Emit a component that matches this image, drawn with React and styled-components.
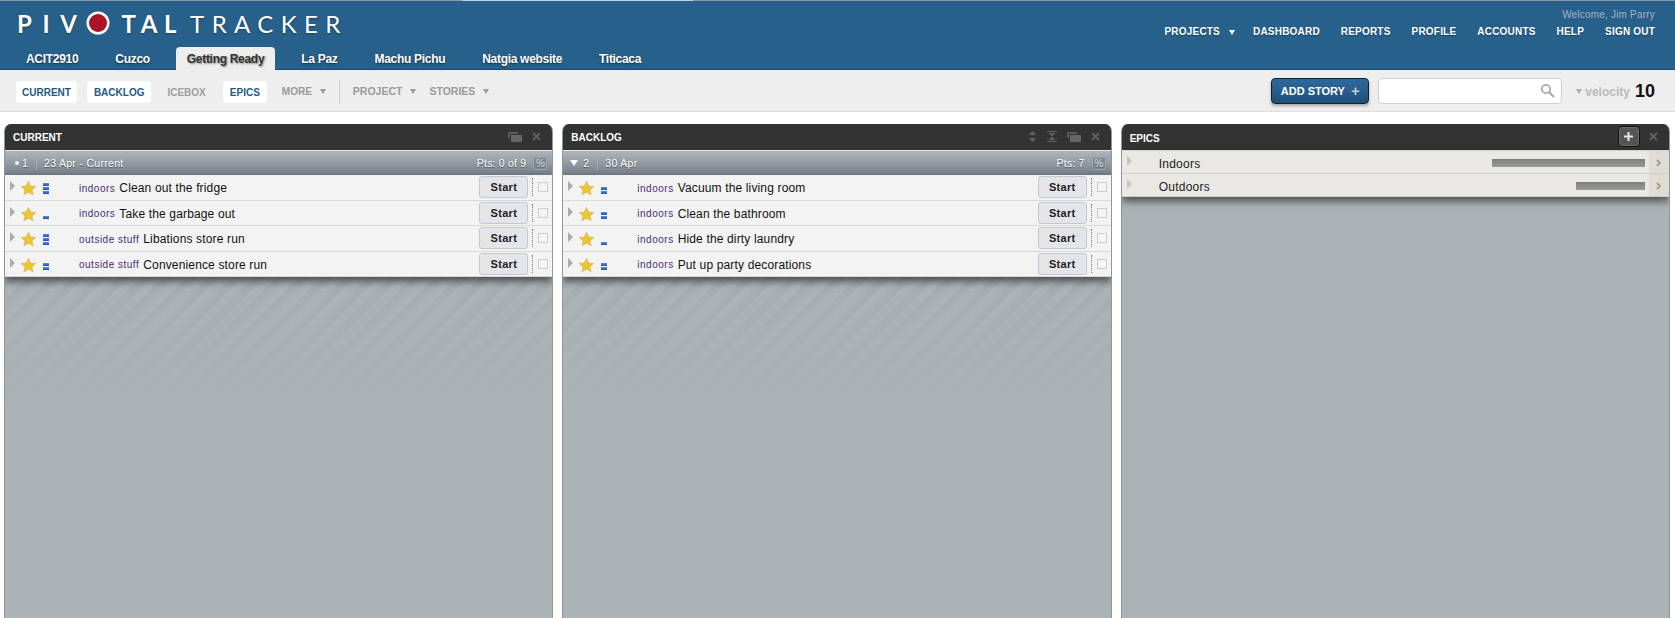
import React from 'react';
import styled, { createGlobalStyle } from 'styled-components';

const GlobalStyle = createGlobalStyle`
  html, body { margin: 0; padding: 0; height: 100%; overflow: hidden; background: #fff; }
  body { font-family: "Liberation Sans", Arial, sans-serif; }
  #root { height: 100%; }
  * { box-sizing: border-box; }
`;

const Page = styled.div`
  display: flex;
  flex-direction: column;
  height: 618px;
`;

//#region header
const TopBar = styled.header`
  position: relative;
  height: 70px;
  flex: none;
  background: #27618b;
  border-top: 1px solid #8d9aa5;
  box-shadow: inset 0 -1px 0 #1d4a6c;
  display: flex;
  flex-direction: column;
  justify-content: space-between;
`;
const ActiveStrip = styled.span`
  position: absolute;
  top: -1px;
  left: 462px;
  width: 231px;
  height: 1px;
  background: #b9d3e6;
`;
const TopRow = styled.div`
  display: flex;
  justify-content: space-between;
  padding: 0 20px 0 17px;
`;
const Logo = styled.div`
  display: flex;
  align-items: center;
  height: 46px;
  color: #fff;
  font-family: Lato, "Liberation Sans", sans-serif;
  font-size: 24px;
  text-shadow: 0 1px 2px rgba(0, 0, 0, 0.35);
  padding-bottom: 2px;
`;
const LogoBold = styled.span`
  font-weight: 700;
  letter-spacing: ${({ $tight }) => ($tight ? 6.6 : 10.6)}px;
`;
const LogoLight = styled.span`
  font-weight: 400;
  letter-spacing: 7.4px;
  margin-left: 7px;
`;
const LogoDot = styled.svg`
  width: 24px;
  height: 24px;
  margin: 0 11px 0 -1px;
`;
const UserArea = styled.div`
  display: flex;
  flex-direction: column;
  align-items: flex-end;
`;
const Welcome = styled.div`
  color: #a3b4c1;
  font-size: 10px;
  line-height: 12px;
  margin-top: 8px;
  letter-spacing: 0.2px;
`;
const NavList = styled.nav`
  display: flex;
  align-items: center;
  gap: 21px;
  margin-top: 4px;
`;
const NavLink = styled.span`
  color: #fff;
  font-size: 10px;
  font-weight: 700;
  line-height: 14px;
  letter-spacing: 0.2px;
  text-shadow: 0 1px 1px rgba(0, 0, 0, 0.4);
  display: flex;
  align-items: center;
  gap: 9px;
  margin-right: ${({ $pull = 0 }) => -$pull}px;
`;
const DownArrow = styled.i`
  width: 0;
  height: 0;
  flex: none;
  border-left: ${({ $size = 3 }) => $size}px solid transparent;
  border-right: ${({ $size = 3 }) => $size}px solid transparent;
  border-top: ${({ $size = 3 }) => $size + 2}px solid ${({ $color = '#fff' }) => $color};
`;
const TabRow = styled.div`
  display: flex;
  gap: 15px;
  padding-left: 15px;
`;
const Tab = styled.div`
  height: 24px;
  padding: 0 11px;
  border-radius: 4px 4px 0 0;
  font-size: 12px;
  font-weight: 700;
  line-height: 25px;
  letter-spacing: -0.3px;
  white-space: nowrap;
  color: ${({ $active }) => ($active ? '#333' : '#fff')};
  background: ${({ $active }) => ($active ? '#eeeeee' : 'transparent')};
  text-shadow: ${({ $active }) => ($active ? '1px 1px 2px rgba(0,0,0,.45)' : '0 1px 2px rgba(0,0,0,.6)')};
`;
//#endregion

//#region toolbar
const Toolbar = styled.div`
  height: 42px;
  flex: none;
  background: #eeeeee;
  border-bottom: 1px solid #dcdcdc;
  display: flex;
  align-items: center;
  padding: 0 20px 0 16px;
`;
const ToolLeft = styled.div`
  display: flex;
  align-items: center;
  flex: 1;
  padding-top: 2px;
`;
const ToolButton = styled.span`
  display: block;
  height: 22px;
  line-height: 23px;
  padding: 0 ${({ $pad = 6 }) => $pad}px;
  margin-right: ${({ $gap = 10 }) => $gap}px;
  border-radius: 4px;
  font-size: 10px;
  font-weight: 700;
  color: ${({ $on }) => ($on ? '#1f5a86' : '#9e9e9e')};
  background: ${({ $on }) => ($on ? '#fff' : 'transparent')};
`;
const ToolMenu = styled.span`
  display: flex;
  align-items: center;
  gap: 8px;
  font-size: ${({ $raised }) => ($raised ? 10.5 : 10)}px;
  font-weight: 700;
  color: #9a9a9a;
  margin-top: ${({ $raised }) => ($raised ? -1 : 0)}px;
  margin-right: ${({ $gap = 13 }) => $gap}px;
`;
const ToolDivider = styled.span`
  width: 1px;
  height: 24px;
  background: #cfcfcf;
  margin: 0 13px;
`;
const AddStory = styled.button`
  width: 98px;
  height: 26px;
  border: 1px solid #14202c;
  border-radius: 4px;
  background: linear-gradient(#2f6a9c, #1f4f7c);
  color: #fff;
  font: 700 11px "Liberation Sans", sans-serif;
  box-shadow: 0 2px 3px rgba(0, 0, 0, 0.3);
  display: flex;
  align-items: center;
  justify-content: center;
  gap: 6px;
  padding: 0;
`;
const PlusMark = styled.span`
  font-size: 15px;
  font-weight: 700;
  line-height: 12px;
  color: #b9cddd;
`;
const SearchBox = styled.div`
  width: 184px;
  height: 26px;
  margin: 0 14px 0 9px;
  background: #fff;
  border: 1px solid #cfcfcf;
  border-radius: 4px;
  display: flex;
  align-items: center;
  justify-content: flex-end;
  padding-right: 6px;
`;
const Velocity = styled.div`
  display: flex;
  align-items: center;
  gap: 3px;
  margin-top: 2px;
  font-size: 12px;
  font-weight: 700;
  color: #b9b9b9;
`;
const VelocityValue = styled.b`
  font-size: 18px;
  color: #111;
  margin-left: 2px;
`;
//#endregion

//#region panels
const PanelGrid = styled.main`
  flex: 1;
  min-height: 0;
  display: grid;
  grid-template-columns: repeat(3, 1fr);
  gap: 9px;
  padding: 12px 5px 0 4px;
`;
const Panel = styled.section`
  display: flex;
  flex-direction: column;
  background: #abb3b7;
  border-left: 1px solid #8f979b;
  border-right: 1px solid #8f979b;
  border-radius: 7px 7px 0 0;
  margin-bottom: -8px;
  overflow: hidden;
`;
const PanelHead = styled.div`
  height: 27px;
  flex: none;
  margin: 0 -1px;
  background: #333333;
  border-bottom: 1px solid #e4e6e8;
  display: flex;
  align-items: center;
  justify-content: space-between;
  padding: 0 12px 1px 9px;
  color: #fff;
`;
const PanelTitle = styled.span`
  font-size: 10px;
  font-weight: 700;
  margin-top: ${({ $low }) => ($low ? 4 : 2)}px;
`;
const HeadTools = styled.div`
  display: flex;
  align-items: center;
  gap: 10px;
`;
const ToolIcon = styled.svg`
  display: block;
  flex: none;
`;
const PlusButton = styled.span`
  width: 22px;
  height: 21px;
  background: #555;
  border: 1px solid #111;
  border-radius: 4px;
  color: #e8e8e8;
  display: flex;
  align-items: center;
  justify-content: center;
  margin-right: -1px;
  box-shadow: inset 0 0 0 1px #6a6a6a;
`;
const IterationHead = styled.div`
  height: 24px;
  flex: none;
  background: linear-gradient(#b0b5bc, #767f88);
  display: flex;
  align-items: center;
  padding: 0 5px 0 9px;
  color: #fff;
  font-size: 10.5px;
  letter-spacing: 0.3px;
  text-shadow: 0 1px 1px rgba(0, 0, 0, 0.45);
`;
const Bullet = styled.i`
  width: 4px;
  height: 4px;
  border-radius: 50%;
  background: #eef1f3;
  margin: 0 3px 0 1px;
`;
const IterArrow = styled(DownArrow)`
  margin: 0 5px 0 -2px;
`;
const IterNumber = styled.span`
  width: 15px;
  text-align: left;
  border-right: 1px solid #a3abb3;
  height: 14px;
  line-height: 14px;
  margin-right: 7px;
  flex: none;
`;
const IterPoints = styled.span`
  margin-left: auto;
  letter-spacing: 0.2px;
`;
const PercentBox = styled.span`
  width: 14px;
  height: 13px;
  margin-left: 7px;
  border: 1px solid #9aa4ab;
  background: #7e8991;
  border-radius: 2px;
  font-size: 10px;
  line-height: 11px;
  letter-spacing: 0;
  text-align: center;
  color: #e3e6e8;
`;
const StoryList = styled.div`
  flex: none;
  box-shadow: 0 4px 8px rgba(0, 0, 0, 0.6);
  position: relative;
  z-index: 1;
`;
const StoryRow = styled.div`
  height: 25.5px;
  background: #f3f3f3;
  border-bottom: 1px solid #d8d8d8;
  display: flex;
  align-items: center;
  padding: 0 4px 0 5px;
`;
const RowTriangle = styled.i`
  width: 0;
  height: 0;
  flex: none;
  border-top: 5px solid transparent;
  border-bottom: 5px solid transparent;
  border-left: 5px solid ${({ $pale }) => ($pale ? '#c6c6bd' : '#aaaaaa')};
  margin-top: -2px;
`;
const Star = styled.svg`
  width: 15px;
  height: 14px;
  flex: none;
  margin: 2px 7px 0 6px;
`;
const Estimate = styled.span`
  width: 6px;
  height: 11px;
  flex: none;
  display: flex;
  flex-direction: column;
  justify-content: flex-end;
  gap: 1px;
  margin: 2px 30px 0 0;
`;
const EstimateBar = styled.i`
  height: 3px;
  background: linear-gradient(#5b8fe0, #1e49c4);
`;
const StoryLabel = styled.span`
  color: #4a2c78;
  font-size: 10px;
  letter-spacing: 0.5px;
  margin: 2px 4px 0 0;
  white-space: nowrap;
`;
const StoryName = styled.span`
  color: #111;
  font-size: 12px;
  letter-spacing: 0.15px;
  margin-top: 2px;
  white-space: nowrap;
`;
const StartButton = styled.span`
  width: 49px;
  height: 22px;
  margin-left: auto;
  flex: none;
  background: #e4e5e9;
  border: 1px solid #c2c8cf;
  border-radius: 3px;
  color: #222;
  font-size: 11px;
  font-weight: 700;
  letter-spacing: 0.3px;
  text-align: center;
  line-height: 20px;
`;
const DottedRule = styled.i`
  height: 18px;
  border-left: 1px dotted #777;
  margin: 0 5px 0 4px;
`;
const SelectBox = styled.i`
  width: 10px;
  height: 10px;
  flex: none;
  border: 1px solid #cccccc;
  background: #f5f5f5;
`;
const StripeArea = styled.div`
  flex: 1;
  position: relative;
  &::before {
    content: '';
    position: absolute;
    inset: 0;
    height: 130px;
    background: repeating-linear-gradient(135deg, #a5adb1 0 8px, #abb3b7 8px 16px);
    -webkit-mask-image: linear-gradient(#000, transparent);
    mask-image: linear-gradient(#000, transparent);
  }
`;
const EpicRow = styled.div`
  height: 23px;
  background: #e9e8e3;
  border-bottom: 1px solid #cfcec8;
  display: flex;
  align-items: center;
  padding-left: 5px;
  color: #222;
  font-size: 12px;
  letter-spacing: 0.25px;
`;
const EpicName = styled.span`
  margin: 4px 0 0 27px;
`;
const EpicBar = styled.span`
  height: 8px;
  margin: 2px 0 0 auto;
  background: linear-gradient(#7e7e7e, #9a9a9a);
`;
const EpicChevron = styled.span`
  width: 20px;
  align-self: stretch;
  margin-left: 4px;
  padding-top: 2px;
  background: #dedcd5;
  display: flex;
  align-items: center;
  justify-content: center;
`;
//#endregion

const PROJECTS = ['ACIT2910', 'Cuzco', 'Getting Ready', 'La Paz', 'Machu Pichu', 'Natgia website', 'Titicaca'];
const NAV = ['DASHBOARD', 'REPORTS', 'PROFILE', 'ACCOUNTS', 'HELP', 'SIGN OUT'];

const CURRENT = [
  { label: 'indoors', name: 'Clean out the fridge', points: 3 },
  { label: 'indoors', name: 'Take the garbage out', points: 1 },
  { label: 'outside stuff', name: 'Libations store run', points: 3 },
  { label: 'outside stuff', name: 'Convenience store run', points: 2 },
];
const BACKLOG = [
  { label: 'indoors', name: 'Vacuum the living room', points: 2 },
  { label: 'indoors', name: 'Clean the bathroom', points: 2 },
  { label: 'indoors', name: 'Hide the dirty laundry', points: 1 },
  { label: 'indoors', name: 'Put up party decorations', points: 2 },
];
const EPICS = [
  { name: 'Indoors', width: 153 },
  { name: 'Outdoors', width: 69 },
];

const StarIcon = () => (
  <Star viewBox="0 0 15 14">
    <polygon
      points="7.5,0.3 9.7,5 14.8,5.5 11,8.9 12.1,13.8 7.5,11.3 2.9,13.8 4,8.9 0.2,5.5 5.3,5"
      fill="#ecc535"
      stroke="#c9a84a"
      strokeWidth="0.5"
    />
  </Star>
);

const WindowsIcon = () => (
  <ToolIcon width="14" height="10" viewBox="0 0 14 10">
    <path d="M0 0h10v2H2v4H0z" fill="#5a5a5a" />
    <rect x="3" y="3" width="11" height="7" fill="#666" />
  </ToolIcon>
);

const CloseIcon = () => (
  <ToolIcon width="9" height="9" viewBox="0 0 9 9">
    <path d="M1 1l7 7M8 1L1 8" stroke="#626262" strokeWidth="1.8" />
  </ToolIcon>
);

const SortIcon = () => (
  <ToolIcon width="9" height="11" viewBox="0 0 9 11">
    <path d="M4.5 0L8 4H1zM4.5 11L1 7h7z" fill="#626262" />
  </ToolIcon>
);

const CollapseIcon = () => (
  <ToolIcon width="10" height="11" viewBox="0 0 10 11">
    <path d="M0 0h10v1H0zM1.500 2h7L5 5.500zM0 10h10v1H0zM1.500 9h7L5 5.500z" fill="#626262" />
  </ToolIcon>
);

const StoryRows = ({ stories }) => (
  <StoryList>
    {stories.map((story) => (
      <StoryRow key={story.name}>
        <RowTriangle />
        <StarIcon />
        <Estimate>
          {Array.from({ length: story.points }).map((_, i) => (
            <EstimateBar key={i} />
          ))}
        </Estimate>
        <StoryLabel>{story.label}</StoryLabel>
        <StoryName>{story.name}</StoryName>
        <StartButton>Start</StartButton>
        <DottedRule />
        <SelectBox />
      </StoryRow>
    ))}
  </StoryList>
);

const App = () => (
  <Page>
    <GlobalStyle />
    <TopBar>
      <ActiveStrip />
      <TopRow>
        <Logo>
          <LogoBold>PIV</LogoBold>
          <LogoDot viewBox="0 0 24 24">
            <circle cx="12" cy="12" r="11.500" fill="#fff" />
            <circle cx="12" cy="12" r="9" fill="#ad1425" />
          </LogoDot>
          <LogoBold $tight>TAL</LogoBold>
          <LogoLight>TRACKER</LogoLight>
        </Logo>
        <UserArea>
          <Welcome>Welcome, Jim Parry</Welcome>
          <NavList>
            <NavLink $pull={3}>
              PROJECTS <DownArrow />
            </NavLink>
            {NAV.map((item) => (
              <NavLink key={item}>{item}</NavLink>
            ))}
          </NavList>
        </UserArea>
      </TopRow>
      <TabRow>
        {PROJECTS.map((name) => (
          <Tab key={name} $active={name === 'Getting Ready'}>
            {name}
          </Tab>
        ))}
      </TabRow>
    </TopBar>

    <Toolbar>
      <ToolLeft>
        <ToolButton $on>CURRENT</ToolButton>
        <ToolButton $on $pad={7}>BACKLOG</ToolButton>
        <ToolButton $gap={11}>ICEBOX</ToolButton>
        <ToolButton $on $pad={7} $gap={15}>EPICS</ToolButton>
        <ToolMenu $gap={0}>
          MORE <DownArrow $color="#9a9a9a" />
        </ToolMenu>
        <ToolDivider />
        <ToolMenu $raised>
          PROJECT <DownArrow $color="#9a9a9a" />
        </ToolMenu>
        <ToolMenu $raised $gap={0}>
          STORIES <DownArrow $color="#9a9a9a" />
        </ToolMenu>
      </ToolLeft>
      <AddStory>
        ADD STORY <PlusMark>+</PlusMark>
      </AddStory>
      <SearchBox>
        <svg width="15" height="15" viewBox="0 0 15 15">
          <circle cx="6" cy="6" r="4.200" fill="none" stroke="#aaa" strokeWidth="1.800" />
          <path d="M9 9l5 5" stroke="#aaa" strokeWidth="2.200" />
        </svg>
      </SearchBox>
      <Velocity>
        <DownArrow $color="#aaa" />
        velocity
        <VelocityValue>10</VelocityValue>
      </Velocity>
    </Toolbar>

    <PanelGrid>
      <Panel>
        <PanelHead>
          <PanelTitle>CURRENT</PanelTitle>
          <HeadTools>
            <WindowsIcon />
            <CloseIcon />
          </HeadTools>
        </PanelHead>
        <IterationHead>
          <Bullet />
          <IterNumber>1</IterNumber>
          23 Apr - Current
          <IterPoints>Pts: 0 of 9</IterPoints>
          <PercentBox>%</PercentBox>
        </IterationHead>
        <StoryRows stories={CURRENT} />
        <StripeArea />
      </Panel>

      <Panel>
        <PanelHead>
          <PanelTitle>BACKLOG</PanelTitle>
          <HeadTools>
            <SortIcon />
            <CollapseIcon />
            <WindowsIcon />
            <CloseIcon />
          </HeadTools>
        </PanelHead>
        <IterationHead>
          <IterArrow $size={4} />
          <IterNumber>2</IterNumber>
          30 Apr
          <IterPoints>Pts: 7</IterPoints>
          <PercentBox>%</PercentBox>
        </IterationHead>
        <StoryRows stories={BACKLOG} />
        <StripeArea />
      </Panel>

      <Panel>
        <PanelHead>
          <PanelTitle $low>EPICS</PanelTitle>
          <HeadTools>
            <PlusButton>
              <svg width="9" height="9" viewBox="0 0 9 9">
                <path d="M4.500 0v9M0 4.500h9" stroke="#e8e8e8" strokeWidth="2" />
              </svg>
            </PlusButton>
            <CloseIcon />
          </HeadTools>
        </PanelHead>
        <StoryList>
          {EPICS.map((epic) => (
            <EpicRow key={epic.name}>
              <RowTriangle $pale />
              <EpicName>{epic.name}</EpicName>
              <EpicBar style={{ width: epic.width }} />
              <EpicChevron>
                <svg width="5" height="8" viewBox="0 0 5 8">
                  <path d="M1 1l3 3-3 3" fill="none" stroke="#a09c80" strokeWidth="1.800" />
                </svg>
              </EpicChevron>
            </EpicRow>
          ))}
        </StoryList>
      </Panel>
    </PanelGrid>
  </Page>
);

export default App;
